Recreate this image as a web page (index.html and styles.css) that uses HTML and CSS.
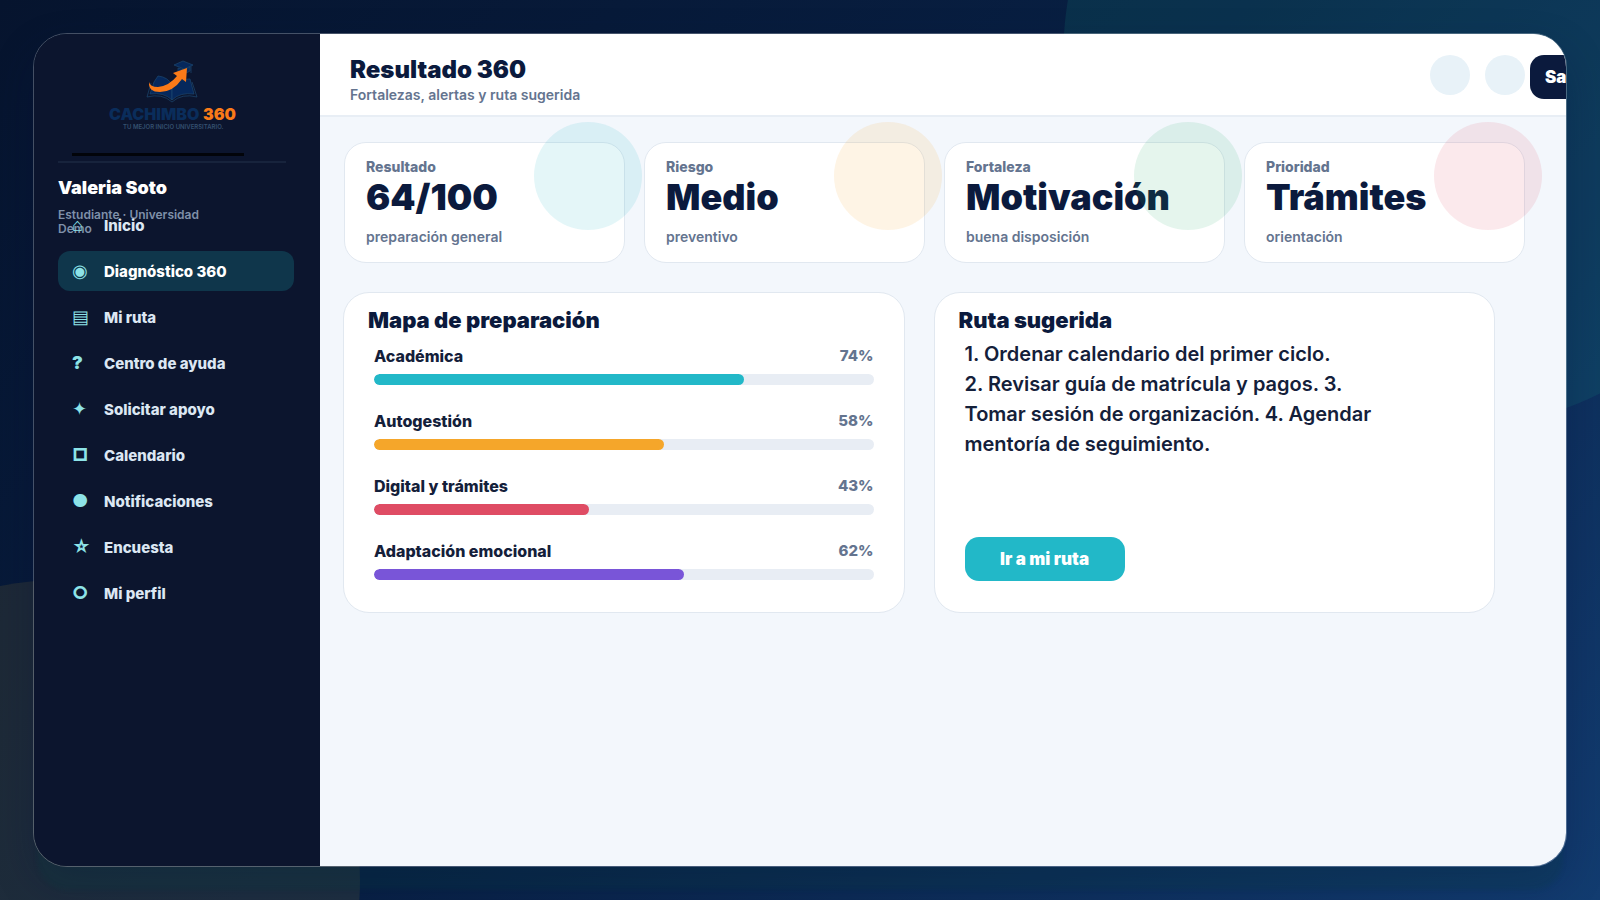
FILE: index.html
```html
<!DOCTYPE html>
<html lang="es">
  <head>
    <meta charset="UTF-8" />
    <meta name="viewport" content="width=device-width, initial-scale=1.0" />
    <title>Cachimbo360 - Resultado 360</title>
    <link rel="stylesheet" href="styles.css">
  </head>
  <body>
    <div class="window">
      <aside class="sidebar">
        <div class="brand">
          <svg class="logo" viewBox="0 0 170 90" role="img" aria-label="Cachimbo360">
            <g fill="#06285c" stroke="#1d4770" stroke-width="0.7">
              <path fill="#0c152e" d="M61 32 L57 46 Q72 42 82 51 Q92 42 107 46 L102 31" />
              <path d="M68 25 Q78 26 82 34 L82 49 Q74 41 60 43 L64 31Z" />
              <path d="M100 28 Q88 28 82 34 L82 49 Q90 41 104 43Z" />
              <path d="M84 14 L93 10 L103 14 L94 18Z" />
              <path d="M88 17 V21 Q94 24 100 20 V16 L94 19Z" />
              <path d="M101 15 V22" />
            </g>
            <path fill="#fa7a18" d="M59 31 Q60 36 68 36 Q79 35 87 25 L83 22 L97 17 L96 31 L92 28 Q83 41 70 41 Q58 41 59 31Z" />
            <text class="logo-name" x="19" y="69">CACHIMBO</text>
            <text class="logo-name logo-number" x="113" y="69">360</text>
            <text class="logo-tagline" x="33" y="78">TU MEJOR INICIO UNIVERSITARIO.</text>
          </svg>
          <div class="brand-line"></div>
        </div>
        <div class="profile">
          <h2 class="profile-name">Valeria Soto</h2>
          <p class="profile-role">Estudiante · Universidad Demo</p>
        </div>
        <nav class="menu">
          <a class="menu-item" href="#"><span class="menu-icon thin">⌂</span>Inicio</a>
          <a class="menu-item active" href="#"><span class="menu-icon thin">◉</span>Diagnóstico 360</a>
          <a class="menu-item" href="#"><span class="menu-icon thin">▤</span>Mi ruta</a>
          <a class="menu-item" href="#"><span class="menu-icon">?</span>Centro de ayuda</a>
          <a class="menu-item" href="#"><span class="menu-icon thin">✦</span>Solicitar apoyo</a>
          <a class="menu-item" href="#"><span class="menu-icon">□</span>Calendario</a>
          <a class="menu-item" href="#"><span class="menu-icon">●</span>Notificaciones</a>
          <a class="menu-item" href="#"><span class="menu-icon">☆</span>Encuesta</a>
          <a class="menu-item" href="#"><span class="menu-icon">○</span>Mi perfil</a>
        </nav>
      </aside>
      <main class="main">
        <header class="topbar">
          <div class="topbar-text">
            <h1 class="page-title">Resultado 360</h1>
            <p class="page-subtitle">Fortalezas, alertas y ruta sugerida</p>
          </div>
          <div class="topbar-actions">
            <button class="round-btn" aria-label="Notificaciones"></button>
            <button class="round-btn" aria-label="Perfil"></button>
            <button class="btn btn-dark">Salir</button>
          </div>
        </header>
        <section class="stats">
          <article class="stat-card teal">
            <h3 class="stat-label">Resultado</h3>
            <p class="stat-value">64/100</p>
            <p class="stat-note">preparación general</p>
          </article>
          <article class="stat-card orange">
            <h3 class="stat-label">Riesgo</h3>
            <p class="stat-value">Medio</p>
            <p class="stat-note">preventivo</p>
          </article>
          <article class="stat-card green">
            <h3 class="stat-label">Fortaleza</h3>
            <p class="stat-value">Motivación</p>
            <p class="stat-note">buena disposición</p>
          </article>
          <article class="stat-card red">
            <h3 class="stat-label">Prioridad</h3>
            <p class="stat-value">Trámites</p>
            <p class="stat-note">orientación</p>
          </article>
        </section>
        <section class="panels">
          <article class="panel">
            <h2 class="panel-title">Mapa de preparación</h2>
            <div class="bars">
              <div class="bar-row">
                <span class="bar-label">Académica</span>
                <span class="bar-value">74%</span>
                <div class="track"><div class="fill teal" style="width: 74%"></div></div>
              </div>
              <div class="bar-row">
                <span class="bar-label">Autogestión</span>
                <span class="bar-value">58%</span>
                <div class="track"><div class="fill orange" style="width: 58%"></div></div>
              </div>
              <div class="bar-row">
                <span class="bar-label">Digital y trámites</span>
                <span class="bar-value">43%</span>
                <div class="track"><div class="fill red" style="width: 43%"></div></div>
              </div>
              <div class="bar-row">
                <span class="bar-label">Adaptación emocional</span>
                <span class="bar-value">62%</span>
                <div class="track"><div class="fill purple" style="width: 62%"></div></div>
              </div>
            </div>
          </article>
          <article class="panel">
            <h2 class="panel-title">Ruta sugerida</h2>
            <p class="route-text">1. Ordenar calendario del primer ciclo.<br>2. Revisar guía de matrícula y pagos. 3. Tomar sesión de organización. 4. Agendar mentoría de seguimiento.</p>
            <button class="btn btn-teal">Ir a mi ruta</button>
          </article>
        </section>
      </main>
    </div>
  </body>
</html>
```

FILE: styles.css
```css
* {
  margin: 0;
  padding: 0;
  box-sizing: border-box;
}
body {
  font-family: "Inter", "Noto Sans", sans-serif;
  background: linear-gradient(135deg, #06142e 0%, #082044 50%, #123c70 100%);
  height: 100vh;
  padding: 33px;
  position: relative;
  overflow: hidden;
  color: #0b1a3d;
}
body::before,
body::after {
  content: "";
  position: absolute;
  border-radius: 50%;
}
body::before {
  width: 744px;
  height: 744px;
  top: -312px;
  right: -207px;
  background: rgba(24, 140, 130, 0.16);
}
body::after {
  width: 600px;
  height: 600px;
  left: -240px;
  bottom: -280px;
  background: rgba(190, 160, 40, 0.12);
}
button {
  font-family: inherit;
  border: none;
  cursor: pointer;
}
.window {
  position: relative;
  z-index: 1;
  display: flex;
  height: 100%;
  border: 1px solid rgba(255, 255, 255, 0.25);
  border-radius: 34px;
  overflow: hidden;
  box-shadow: 0 27px 4px -4px rgba(8, 64, 64, 0.2),
    0 18px 40px rgba(0, 16, 60, 0.25);
}
.sidebar {
  width: 286px;
  flex-shrink: 0;
  background: #0c152e;
  padding: 17px 26px 24px 24px;
}
.brand {
  width: 228px;
  height: 112px;
  border-bottom: 2px solid #17233c;
}
.logo {
  display: block;
  width: 170px;
  height: 90px;
  margin-left: 32px;
}
.logo-name {
  font-size: 16px;
  font-weight: 900;
  fill: #0a2d5b;
}
.logo-number {
  fill: #fa7a18;
}
.logo-tagline {
  font-size: 6px;
  font-weight: 600;
  fill: #34506f;
}
.brand-line {
  width: 172px;
  height: 3px;
  margin: 12px 0 0 14px;
  background: #02040a;
}
.profile {
  height: 28px;
  margin-top: 14px;
}
.profile-name {
  font-size: 18px;
  font-weight: 900;
  line-height: 22px;
  color: #fff;
}
.profile-role {
  width: 170px;
  margin-top: 9px;
  font-size: 12px;
  font-weight: 600;
  line-height: 14px;
  color: #7f90a9;
}
.menu {
  display: flex;
  flex-direction: column;
  gap: 6px;
  position: relative;
}
.menu-item {
  display: flex;
  align-items: center;
  height: 40px;
  padding-left: 14px;
  border-radius: 12px;
  font-size: 15px;
  font-weight: 800;
  color: #dce7f3;
  text-decoration: none;
}
.menu-item.active {
  background: #0f364b;
  color: #fff;
}
.menu-icon {
  width: 32px;
  font-size: 18px;
  font-weight: 900;
  line-height: 20px;
  color: #8de3e8;
}
.menu-icon.thin {
  font-weight: 400;
}
.main {
  flex: 1;
  min-width: 0;
  background: #f3f7fc;
}
.topbar {
  display: flex;
  justify-content: space-between;
  height: 83px;
  padding: 21px 0 0 30px;
  background: #fff;
  border-bottom: 2px solid #e8eef5;
}
.page-title {
  font-size: 24px;
  font-weight: 900;
  line-height: 30px;
}
.page-subtitle {
  font-size: 14px;
  font-weight: 600;
  line-height: 20px;
  color: #64748f;
}
.topbar-actions {
  display: flex;
  align-items: flex-start;
  margin-right: -54px;
}
.round-btn {
  width: 40px;
  height: 40px;
  margin-right: 15px;
  border-radius: 50%;
  background: #e8f2f8;
}
.round-btn + .round-btn {
  margin-right: 5px;
}
.btn {
  height: 44px;
  border-radius: 14px;
  font-size: 17px;
  font-weight: 900;
  color: #fff;
}
.btn-dark {
  width: 90px;
  padding-left: 15px;
  background: #0b1a3d;
  text-align: left;
}
.btn-teal {
  width: 160px;
  margin-left: 6px;
  background: #22b8c8;
}
.stats {
  display: grid;
  grid-template-columns: repeat(4, 1fr);
  gap: 19px;
  padding: 25px 41px 0 24px;
}
.stat-card {
  position: relative;
  height: 121px;
  padding: 16px 21px;
  background: #fff;
  border: 1px solid #e1e8f0;
  border-radius: 22px;
}
.stat-card::after {
  content: "";
  position: absolute;
  top: -21px;
  right: -18px;
  width: 108px;
  height: 108px;
  border-radius: 50%;
  opacity: 0.12;
}
.stat-card.teal::after,
.fill.teal {
  background: #22b8c8;
}
.stat-card.orange::after,
.fill.orange {
  background: #f5a62a;
}
.stat-card.green::after {
  background: #2bab6a;
}
.stat-card.red::after,
.fill.red {
  background: #df4c64;
}
.fill.purple {
  background: #7955d8;
}
.stat-label {
  font-size: 14px;
  font-weight: 800;
  line-height: 16px;
  color: #64748f;
}
.stat-value {
  font-size: 36px;
  font-weight: 900;
  line-height: 44px;
}
.stat-note {
  margin-top: 10px;
  font-size: 14px;
  font-weight: 600;
  line-height: 16px;
  color: #64748f;
}
.panels {
  display: grid;
  grid-template-columns: repeat(2, 1fr);
  gap: 29px;
  padding: 29px 71px 0 23px;
}
.panel {
  height: 321px;
  padding: 13px 24px;
  background: #fff;
  border: 1px solid #e1e8f0;
  border-radius: 26px;
}
.panel-title {
  font-size: 22px;
  font-weight: 900;
  line-height: 28px;
}
.bars {
  display: flex;
  flex-direction: column;
  gap: 26px;
  padding: 12px 6px 0;
}
.bar-row {
  display: grid;
  grid-template-columns: 1fr auto;
  row-gap: 8px;
  font-size: 16px;
  font-weight: 800;
  line-height: 20px;
  color: #14203a;
}
.bar-value {
  font-size: 15px;
  color: #64748f;
}
.track {
  grid-column: 1 / -1;
  height: 11px;
  border-radius: 6px;
  background: #e8edf4;
  overflow: hidden;
}
.fill {
  height: 100%;
  border-radius: 6px;
}
.route-text {
  max-width: 430px;
  height: 203px;
  padding: 5px 0 0 6px;
  font-size: 20px;
  font-weight: 600;
  line-height: 30px;
  color: #14203a;
}
```
